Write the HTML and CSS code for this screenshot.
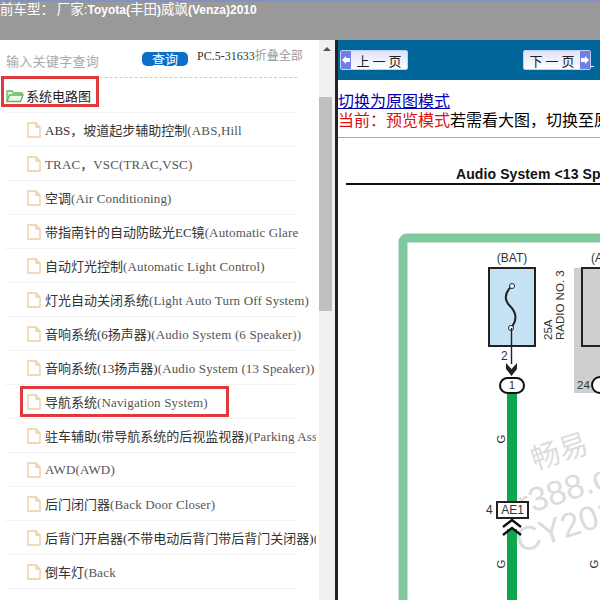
FILE: index.html
```html
<!DOCTYPE html>
<html lang="zh-CN">
<head>
  <meta charset="UTF-8">
  <meta name="viewport" content="width=device-width, initial-scale=1.0">
  <link rel="stylesheet" href="styles.css">
</head>
<body>
  <svg class="defs" width="0" height="0">
    <symbol id="file" viewBox="0 0 14 16"><path d="M1 1h8l4 4v10H1z M9 1v4h4" fill="#fff" stroke="#efcfa3" stroke-width="1.4"/></symbol>
  </svg>

  <div class="top-bar">前车型： 厂家:<span class="lat">Toyota(</span>丰田<span class="lat">)</span>威飒<span class="lat">(Venza)2010</span></div>

  <div class="main">
    <div class="side">
      <div class="tree-wrap">
        <div class="search-row">
          <span class="search-hint">输入关键字查询</span>
          <span class="search-btn">查询</span>
          <span class="fold-text"><span class="pc">PC.5-31633</span>折叠全部</span>
        </div>

        <div class="tree-row root-row">
          <svg class="ico" width="18" height="15" viewBox="0 0 18 15"><path d="M1 13V3h5l1.5 2H16v2" fill="#e4f5e0" stroke="#5cb85c" stroke-width="1.3"/><path d="M1 13.5 3.5 7h13.5l-2.5 6.5z" fill="#eef9ea" stroke="#5cb85c" stroke-width="1.3"/></svg>
          <span class="marked">系统电路图</span>
        </div>

        <div class="tree-row leaf"><svg class="ico" width="14" height="16"><use href="#file"/></svg><span>ABS，坡道起步辅助控制<i>(ABS,Hill</i></span></div>
        <div class="tree-row leaf"><svg class="ico" width="14" height="16"><use href="#file"/></svg><span><i>TRAC</i>，<i>VSC(TRAC,VSC)</i></span></div>
        <div class="tree-row leaf"><svg class="ico" width="14" height="16"><use href="#file"/></svg><span>空调<i>(Air Conditioning)</i></span></div>
        <div class="tree-row leaf"><svg class="ico" width="14" height="16"><use href="#file"/></svg><span>带指南针的自动防眩光EC镜<i>(Automatic Glare</i></span></div>
        <div class="tree-row leaf"><svg class="ico" width="14" height="16"><use href="#file"/></svg><span>自动灯光控制<i>(Automatic Light Control)</i></span></div>
        <div class="tree-row leaf"><svg class="ico" width="14" height="16"><use href="#file"/></svg><span>灯光自动关闭系统<i>(Light Auto Turn Off System)</i></span></div>
        <div class="tree-row leaf"><svg class="ico" width="14" height="16"><use href="#file"/></svg><span>音响系统(6扬声器)<i>(Audio System (6 Speaker))</i></span></div>
        <div class="tree-row leaf"><svg class="ico" width="14" height="16"><use href="#file"/></svg><span>音响系统(13扬声器)<i>(Audio System (13 Speaker))</i></span></div>
        <div class="tree-row leaf"><svg class="ico" width="14" height="16"><use href="#file"/></svg><span>导航系统<i>(Navigation System)</i></span><div class="mark-box"></div></div>
        <div class="tree-row leaf"><svg class="ico" width="14" height="16"><use href="#file"/></svg><span>驻车辅助(带导航系统的后视监视器)<i>(Parking Ass</i></span></div>
        <div class="tree-row leaf"><svg class="ico" width="14" height="16"><use href="#file"/></svg><span><i>AWD(AWD)</i></span></div>
        <div class="tree-row leaf"><svg class="ico" width="14" height="16"><use href="#file"/></svg><span>后门闭门器<i>(Back Door Closer)</i></span></div>
        <div class="tree-row leaf"><svg class="ico" width="14" height="16"><use href="#file"/></svg><span>后背门开启器(不带电动后背门带后背门关闭器)<i>(</i></span></div>
        <div class="tree-row leaf"><svg class="ico" width="14" height="16"><use href="#file"/></svg><span>倒车灯<i>(Back</i></span></div>
      </div>

      <div class="scroll-track">
        <div class="scroll-arrow"></div>
        <div class="scroll-thumb"></div>
      </div>
    </div>

    <div class="view">
      <div class="pager">
        <div class="page-btn prev">
          <span class="cap"><svg width="8" height="8" viewBox="0 0 8 8"><path d="M0 4l4-4v2h4v4H4v2z" fill="#fff"/></svg></span>
          <span class="lbl">上 一 页</span>
        </div>
        <div class="page-btn next">
          <span class="lbl">下 一 页</span>
          <span class="cap"><svg width="8" height="8" viewBox="0 0 8 8"><path d="M8 4L4 0v2H0v4h4v2z" fill="#fff"/></svg></span>
        </div>
      </div>
      <div class="notice">
        <a class="switch-link" href="#">切换为原图模式</a>
        <div class="notice-line"><span class="red">当前：预览模式</span>若需看大图，切换至原</div>
      </div>
      <svg class="diagram" width="262" height="462" viewBox="338 138 262 462">
        <text x="456" y="179" class="dg-title">Audio System &lt;13 Sp</text>
        <rect x="346" y="183" width="254" height="2" fill="#111"/>
        <path d="M403 600V242a4 4 0 0 1 4-4H600" fill="none" stroke="#80c99f" stroke-width="9"/>

        <g class="dg-mark">
          <text x="535" y="470" transform="rotate(-18 535 470)" class="dg-w1">畅易</text>
          <text x="522" y="516" transform="rotate(-18 522 516)" class="dg-w2">r388.c</text>
          <text x="520" y="553" transform="rotate(-18 520 553)" class="dg-w2">CY201</text>
        </g>

        <text x="512" y="262" class="dg-lab" text-anchor="middle">(BAT)</text>
        <rect x="489" y="268" width="46" height="78" fill="#c5e3f5" stroke="#222" stroke-width="2"/>
        <path d="M512 286c-9 8-7 15-2 20s9 12 1 22" fill="none" stroke="#222" stroke-width="2"/>
        <circle cx="512" cy="286" r="2.5" fill="#fff" stroke="#222"/>
        <circle cx="511" cy="328" r="2.5" fill="#fff" stroke="#222"/>
        <text x="564" y="340" class="dg-small" transform="rotate(-90 564 340)">RADIO NO. 3</text>
        <text x="552" y="340" class="dg-small" transform="rotate(-90 552 340)">25A</text>

        <rect x="574" y="268" width="26" height="125" fill="#cfcfcf"/>
        <rect x="582" y="268" width="20" height="78" fill="#cfcfcf" stroke="#222" stroke-width="2"/>
        <text x="591" y="262" class="dg-lab">(A</text>
        <text x="577" y="389" class="dg-small">24</text>
        <circle cx="600" cy="385" r="8" fill="#fff" stroke="#111" stroke-width="2"/>

        <path d="M511.5 328v36" stroke="#222" stroke-width="1.4"/>
        <path d="M506 363l5.5 6 5.5-6v6l-5.5 7-5.5-7z" fill="#222"/>
        <text x="501" y="360" class="dg-lab">2</text>

        <rect x="507" y="392" width="10" height="110" fill="#0fa650"/>
        <rect x="507" y="529" width="10" height="71" fill="#0fa650"/>
        <rect x="500" y="378" width="24" height="15" rx="7.5" fill="#fff" stroke="#111" stroke-width="2"/>
        <text x="512" y="389" class="dg-small" text-anchor="middle">1</text>

        <text transform="rotate(-90 505 439)" x="505" y="439" class="dg-small" text-anchor="middle">G</text>
        <text transform="rotate(-90 505 564)" x="505" y="564" class="dg-small" text-anchor="middle">G</text>
        <text transform="rotate(-90 598 564)" x="598" y="564" class="dg-small" text-anchor="middle">G</text>

        <rect x="497" y="502" width="31" height="16" fill="#fff" fill-opacity=".85" stroke="#222" stroke-width="2"/>
        <text x="512.5" y="514" class="dg-lab" text-anchor="middle">AE1</text>
        <text x="486" y="514" class="dg-lab">4</text>
        <path d="M503 527l9-7 9 7M503 535l9-7 9 7" fill="none" stroke="#111" stroke-width="2.4"/>
      </svg>
    </div>
  </div>
</body>
</html>
```

FILE: styles.css
```css
html, body {
  margin: 0;
  padding: 0;
  height: 600px;
  overflow: hidden;
  background: #fff;
  font-family: "Liberation Serif", "Noto Sans CJK SC", serif;
}

.defs {
  display: block;
  height: 0;
}

.top-bar {
  height: 38px;
  background: #999;
  border-top: 2px solid #8392c4;
  color: #fff;
  font-size: 13.5px;
  word-spacing: -1px;
  font-family: "Liberation Sans", "Noto Sans CJK SC", sans-serif;
  line-height: 16px;
  white-space: nowrap;
}
.lat {
  font-weight: bold;
  font-size: 12px;
}

.main {
  display: flex;
  height: 560px;
}

.side {
  display: flex;
  width: 335px;
  flex: none;
}

.tree-wrap {
  width: 319px;
  overflow: hidden;
  flex: none;
}

.search-row {
  display: flex;
  align-items: flex-start;
  height: 37px;
  padding-left: 6px;
  white-space: nowrap;
}
.search-hint {
  width: 136px;
  flex: none;
  margin-top: 11px;
  font-size: 13px;
  letter-spacing: 0.3px;
  color: #a9a9a9;
  font-family: "Noto Sans CJK SC", sans-serif;
}
.search-btn {
  width: 46px;
  height: 14px;
  margin-top: 12px;
  flex: none;
  background: #0a6fc8;
  border-radius: 5px;
  color: #fff;
  font-size: 13px;
  line-height: 14px;
  text-align: center;
  font-family: "Noto Sans CJK SC", sans-serif;
}
.fold-text {
  margin: 9px 0 0 9px;
  font-size: 12px;
  color: #999;
  line-height: 15px;
}
.fold-text .pc {
  color: #333;
}

.tree-row {
  position: relative;
  display: flex;
  align-items: center;
  height: 34px;
  box-sizing: border-box;
  margin-left: 5px;
  width: 292px;
  border-bottom: 1px solid #f3f3f3;
  font-size: 13px;
  color: #333;
  white-space: nowrap;
}
.root-row {
  padding-left: 1px;
  color: #222;
  font-family: "Noto Sans CJK SC", sans-serif;
  border-top: 1px dashed #ccc;
  height: 36px;
}
.leaf {
  padding-left: 22px;
}
.leaf .ico {
  flex: none;
  margin-right: 4px;
}
.root-row .ico {
  margin-right: 2px;
}
.leaf span {
  display: block;
  flex: none;
  width: 271px;
  overflow: hidden;
}
.leaf i {
  font-style: normal;
  color: #555;
  letter-spacing: 0.15px;
}

/* red marks that were drawn over the screenshot */
.marked {
  position: relative;
}
.marked::after {
  content: "";
  position: absolute;
  left: -25px;
  top: -10px;
  width: 92px;
  height: 25px;
  border: 3px solid #e0383c;
}
.mark-box {
  position: absolute;
  left: 15px;
  top: 1px;
  width: 203px;
  height: 25px;
  border: 3px solid #e0383c;
}

.scroll-track {
  position: relative;
  width: 16px;
  background: #f1f1f1;
  flex: none;
}
.scroll-arrow {
  position: absolute;
  left: 4px;
  top: 7px;
  border-left: 4px solid transparent;
  border-right: 4px solid transparent;
  border-bottom: 4px solid #555;
}
.scroll-thumb {
  position: absolute;
  left: 0;
  right: 3px;
  top: 57px;
  height: 214px;
  background: #bfbfbf;
}

.view {
  flex: 1;
  min-width: 0;
  border-left: 3px solid #222;
  overflow: hidden;
}

.pager {
  display: flex;
  justify-content: space-between;
  align-items: center;
  height: 40px;
  background: #006699;
  padding: 0 9px 0 2px;
}
.page-btn {
  position: relative;
  display: flex;
  align-items: center;
  width: 66px;
  height: 18px;
  border: 1px solid #c6cdf2;
  border-radius: 2px;
  background: linear-gradient(#dfe2f9, #fff);
  font-size: 13px;
  color: #222;
  font-family: "Noto Sans CJK SC", sans-serif;
}
.page-btn .cap {
  display: flex;
  align-items: center;
  justify-content: center;
  flex: none;
  width: 10px;
  height: 18px;
  background: #6f7fe6;
}
.page-btn .lbl {
  flex: 1;
  text-align: center;
}
.next::after {
  content: "";
  position: absolute;
  right: -4px;
  bottom: 2px;
  width: 3px;
  height: 1px;
  background: #fff;
}

.notice {
  height: 58px;
  padding-top: 11px;
  box-sizing: border-box;
  border-bottom: 1px solid #aaa;
  font-size: 16px;
  line-height: 19px;
  white-space: nowrap;
  overflow: hidden;
  font-family: "Noto Sans CJK SC", sans-serif;
}
.switch-link {
  display: block;
  color: #0000b0;
}
.red {
  color: #d81010;
}

.diagram {
  display: block;
  background: #fff;
}
.dg-title {
  font: bold 14px "Liberation Sans", sans-serif;
  letter-spacing: 0.1px;
  fill: #111;
}
.dg-lab {
  font: 12px "Liberation Sans", sans-serif;
  fill: #333;
}
.dg-small {
  font: 11.5px "Liberation Sans", sans-serif;
  fill: #333;
}
.dg-w1 {
  font: 29px "Noto Sans CJK SC", sans-serif;
  fill: #dcdcdc;
}
.dg-w2 {
  font: 34px "Liberation Sans", sans-serif;
  fill: #dcdcdc;
}
```
